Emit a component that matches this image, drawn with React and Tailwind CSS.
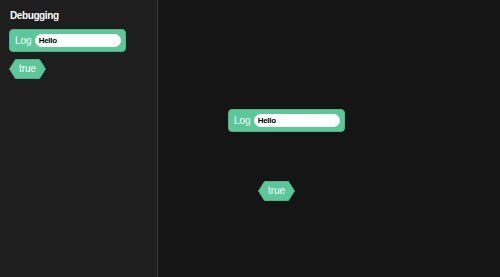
import React from 'react';

function LogBlock() {
    return (
        <div className="flex h-[23px] w-[117px] items-center rounded-[4px] border border-[#4eb487] bg-[#5ac899] pl-[5px] pr-[4px]">
            <span className="text-[10px] leading-none text-white">Log</span>
            <div className="ml-[3px] flex h-[13px] flex-1 items-center rounded-full bg-white pl-[4px] text-[8px] font-bold leading-none tracking-[-0.3px] text-black">
                Hello
            </div>
        </div>
    );
}

function TrueBlock() {
    return (
        <div className="relative h-[20px] w-[37px]">
            <svg width="37" height="20" viewBox="0 0 37 20" className="absolute inset-0">
                <polygon points="0.5,10 6.5,0.5 30.5,0.5 36.5,10 30.5,19.5 6.5,19.5" fill="#5ac899" stroke="#4eb487" />
            </svg>
            <span className="relative flex h-full items-center justify-center text-[10px] leading-none text-white">true</span>
        </div>
    );
}

export default function App() {
    return (
        <div className="flex h-[277px] w-[500px] overflow-hidden bg-[#151515] font-['Liberation_Sans',Arial,sans-serif]">
            <div className="flex w-[158px] shrink-0 flex-col border-r border-[#3a3a3a] bg-[#1e1e1e] pl-[9px] pt-[9px]">
                <h2 className="pl-[1px] text-[10px] font-bold leading-[13px] tracking-[-0.4px] text-white">Debugging</h2>
                <div className="mt-[7px]">
                    <LogBlock />
                </div>
                <div className="mt-[7px]">
                    <TrueBlock />
                </div>
            </div>
            <div className="relative flex-1">
                <div className="absolute left-[70px] top-[109px]">
                    <LogBlock />
                </div>
                <div className="absolute left-[100px] top-[181px]">
                    <TrueBlock />
                </div>
            </div>
        </div>
    );
}
